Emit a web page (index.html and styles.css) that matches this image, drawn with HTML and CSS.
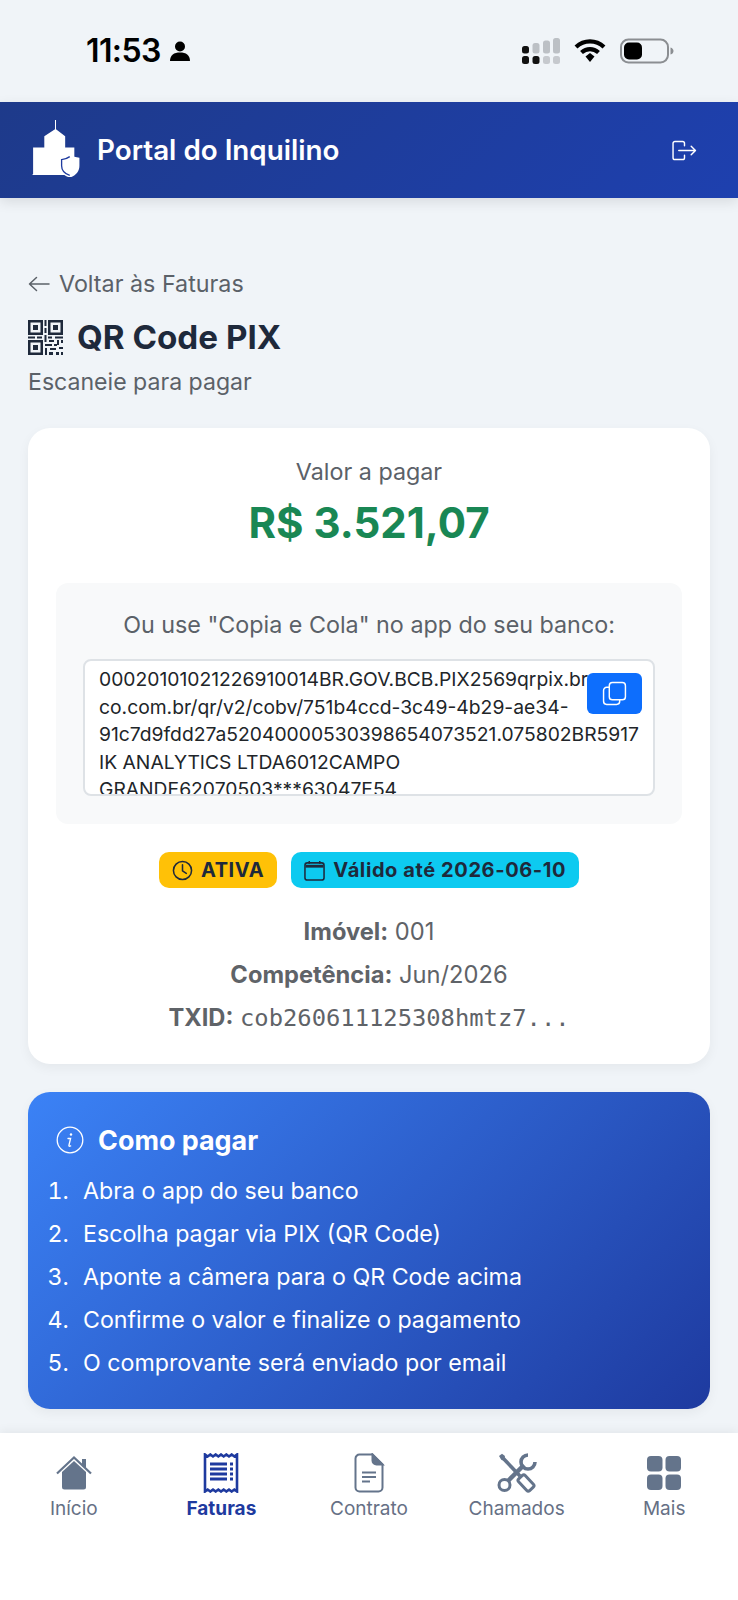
FILE: index.html
```html
<!DOCTYPE html>
<html lang="pt-BR">
<head>
<meta charset="utf-8">
<title>QR Code PIX</title>
<link rel="stylesheet" href="styles.css">
</head>
<body>
<div class="page">
  <div class="statusbar">
    <div class="status-left">
      <span class="clock">11:53</span>
      <svg class="person" viewBox="0 0 22 22"><circle cx="11" cy="6.500" r="5"/><path d="M1 21c0-6 4-8.500 10-8.500S21 15 21 21z"/></svg>
    </div>
    <div class="status-right">
      <svg class="cell" viewBox="0 0 38 26">
        <rect x="0" y="8" width="7" height="7.500" rx="2.500" fill="#111"/><rect x="0" y="18" width="7" height="8" rx="2.500" fill="#111"/>
        <rect x="10.500" y="5" width="7" height="10.500" rx="2.500" fill="#bcc0c5"/><rect x="10.500" y="18" width="7" height="8" rx="2.500" fill="#111"/>
        <rect x="21" y="2.500" width="7" height="13" rx="2.500" fill="#bcc0c5"/><rect x="21" y="18" width="7" height="8" rx="2.500" fill="#c6c9ce"/>
        <rect x="31" y="0" width="7" height="15.500" rx="2.500" fill="#bcc0c5"/><rect x="31" y="18" width="7" height="8" rx="2.500" fill="#c6c9ce"/>
      </svg>
      <svg class="wifi" viewBox="0 0 32 24" fill="none" stroke="#000" stroke-width="4.200">
        <path d="M2 9c8-7.500 20-7.500 28 0"/><path d="M7.500 14.500c5-4.500 12-4.500 17 0"/>
        <path d="M11.500 18.500 16 15l4.500 3.500L16 24z" fill="#000" stroke="none"/>
      </svg>
      <svg class="battery" viewBox="0 0 54 26">
        <rect x="1" y="1.500" width="47" height="23" rx="7.500" fill="none" stroke="#8b8e92" stroke-width="2"/>
        <rect x="4" y="4.500" width="18" height="17" rx="5" fill="#000"/>
        <path d="M50.500 9.500c2 .5 3 2 3 3.500s-1 3-3 3.500z" fill="#8b8e92"/>
      </svg>
    </div>
  </div>

  <header class="appbar">
    <div class="brand">
      <svg class="logo" viewBox="0 0 48 56">
        <path d="M23.500 0h1v9l9 7v11h9v27H1l1-1V27h11V16l10.500-7z" fill="#fff"/>
        <path d="M38 33.500c3 2.500 6 3.500 9.500 3.500v8c0 6-4 10-9.500 11.500C32.500 55 28 51 28 45v-8c4 0 7-1.500 10-3.500z" fill="#fff"/>
        <path d="M38 36c-2.500 1.800-5 2.800-8 3v6c0 4.500 3.500 8 8 9.500" fill="none" stroke="#1e3a9f" stroke-width="1.300"/>
      </svg>
      <span class="brand-name">Portal do Inquilino</span>
    </div>
    <svg class="logout" viewBox="0 0 26 22" fill="none" stroke="#fff" stroke-width="1.500" stroke-linecap="round" stroke-linejoin="round">
      <path d="M13 6V3.500A2 2 0 0 0 11 1.500H3A2 2 0 0 0 1 3.500v15a2 2 0 0 0 2 2h8a2 2 0 0 0 2-2V16"/>
      <path d="M7 11h17M20 6.500l4.500 4.500-4.500 4.500"/>
    </svg>
  </header>

  <main class="content">
    <a class="back"><span class="back-arrow">
      <svg viewBox="0 0 22 16" fill="none" stroke="#5b6168" stroke-width="1.500" stroke-linecap="round" stroke-linejoin="round"><path d="M21 8H1.500M8.500 1.500 1.500 8l7 6.500"/></svg></span>Voltar às Faturas</a>
    <h1 class="title">
      <svg class="qr" viewBox="0 0 35 35" fill="#1e293b">
        <path fill-rule="evenodd" d="M0 0h15v15H0zM2.500 2.500v10h10v-10zM20 0h15v15H20zm2.500 2.500v10h10v-10zM0 20h15v15H0zm2.500 2.500v10h10v-10z"/>
        <path d="M5 5h5v5H5zM25 5h5v5h-5zM5 25h5v5H5zM16.500 0h2v6h-2zM16.500 8h2v5h-2zM0 16.500h7v2H0zM9 16.500h5v2H9zM16.500 15h2v7h-2zM20 16.500h4v2h-4zM27 16.500h8v2h-8zM21 20h5v2h-5zM29 20h2v5h-2zM33 20h2v3h-2zM17 24h7v2h-7zM26 24h3v2h-3zM17 28h2v7h-2zM22 28h6v2h-6zM31 27h4v2h-4zM21 32h4v3h-4zM28 32h3v3h-3zM33 32h2v3h-2z"/>
      </svg>
      QR Code PIX
    </h1>
    <p class="subtitle">Escaneie para pagar</p>

    <section class="card">
      <p class="amount-label">Valor a pagar</p>
      <p class="amount">R$ 3.521,07</p>
      <div class="copy-panel">
        <p class="copy-label">Ou use "Copia e Cola" no app do seu banco:</p>
        <div class="code-box">
          <div class="code">00020101021226910014BR.GOV.BCB.PIX2569qrpix.br<br>co.com.br/qr/v2/cobv/751b4ccd-3c49-4b29-ae34-<br>91c7d9fdd27a52040000530398654073521.075802BR5917<br>IK ANALYTICS LTDA6012CAMPO<br>GRANDE62070503***63047E54</div>
          <button class="copy-btn" type="button" aria-label="Copiar">
            <svg viewBox="0 0 24 24" fill="none" stroke="#fff" stroke-width="1.400" stroke-linejoin="round"><rect x="7" y="1.500" width="15.500" height="16.500" rx="3"/><path d="M7 6H4.500a3 3 0 0 0-3 3v10.500a3 3 0 0 0 3 3H14a3 3 0 0 0 3-3V18"/></svg>
          </button>
        </div>
      </div>
      <div class="badges">
        <span class="badge badge-warn">
          <svg viewBox="0 0 22 22" fill="none" stroke="#1e293b" stroke-width="1.600" stroke-linecap="round" stroke-linejoin="round"><circle cx="11" cy="11" r="9.500"/><path d="M11 5v6.500l4 2.500"/></svg>ATIVA</span>
        <span class="badge badge-info">
          <svg viewBox="0 0 22 22" fill="none" stroke="#1e293b" stroke-width="1.600" stroke-linejoin="round"><rect x="1" y="3" width="20" height="18" rx="2.500"/><path d="M1.500 6.500h19" stroke-width="3"/><path d="M5.500 1v3M16.500 1v3"/></svg>Válido até 2026-06-10</span>
      </div>
      <dl class="facts">
        <div><b>Imóvel:</b> 001</div>
        <div><b>Competência:</b> Jun/2026</div>
        <div><b>TXID:</b> <code>cob260611125308hmtz7...</code></div>
      </dl>
    </section>

    <section class="howto">
      <h2 class="howto-title">
        <svg viewBox="0 0 28 28" fill="none" stroke="#fff" stroke-width="1.300"><circle cx="14" cy="14" r="12.800"/><path d="M12 12.500h2.600l-1.700 7c-.2.800.3 1 1.800.4" stroke-linecap="round"/><circle cx="15" cy="8.500" r="1.200" fill="#fff" stroke="none"/></svg>
        Como pagar
      </h2>
      <ol class="steps">
        <li>Abra o app do seu banco</li>
        <li>Escolha pagar via PIX (QR Code)</li>
        <li>Aponte a câmera para o QR Code acima</li>
        <li>Confirme o valor e finalize o pagamento</li>
        <li>O comprovante será enviado por email</li>
      </ol>
    </section>
  </main>

  <nav class="tabbar">
    <a class="tab">
      <svg viewBox="0 0 40 40"><path d="M8 19 20 8l12 11v15a2.500 2.500 0 0 1-2.500 2.500h-19A2.500 2.500 0 0 1 8 34z" fill="#64748b"/><path d="M3 20.500 20 4.500l17 16" fill="none" stroke="#64748b" stroke-width="2.200"/><path d="M28 6h4v10l-4-3.500z" fill="#64748b"/></svg>
      <span>Início</span>
    </a>
    <a class="tab tab-active">
      <svg viewBox="0 0 40 40"><path d="M4 1.500l2.667 2 2.667-2 2.667 2 2.667-2 2.667 2 2.667-2 2.667 2 2.667-2 2.667 2 2.667-2 2.667 2 2.667-2V38.500l-2.667-2-2.667 2-2.667-2-2.667 2-2.667-2-2.667 2-2.667-2-2.667 2-2.667-2-2.667 2-2.667-2-2.667 2z" fill="#fff" stroke="#1e3a9f" stroke-width="2.600"/><path d="M9 9.500h17v3H9zM9 14.500h17v3H9zM9 19.500h17v3H9zM9 24.500h17v3H9zM29 9.500h3v3h-3zM29 14.500h3v3h-3zM29 19.500h3v3h-3zM29 24.500h3v3h-3z" fill="#1e3a9f"/></svg>
      <span>Faturas</span>
    </a>
    <a class="tab">
      <svg viewBox="0 0 40 40" fill="none" stroke="#64748b" stroke-width="2"><path d="M10.500 1.500h13l10 10v23a4 4 0 0 1-4 4h-19a4 4 0 0 1-4-4V5.500a4 4 0 0 1 4-4z"/><path d="M23.500 1.500v6a4 4 0 0 0 4 4h6z" fill="#64748b"/><path d="M13 19.500h14M13 24h14M13 28.500h8" stroke-width="2.200"/></svg>
      <span>Contrato</span>
    </a>
    <a class="tab">
      <svg viewBox="0 0 40 40" fill="none" stroke="#64748b">
        <path d="M4.500 3.500 23 23" stroke-width="3.600"/>
        <path d="M2 3 5 .8 8 3 7 7.500 4.500 7z" fill="#64748b" stroke="none"/>
        <rect x="-4.500" y="-8" width="9" height="16" rx="2" transform="translate(29 30) rotate(-43)" stroke-width="3"/>
        <path d="M11 28 27 12" stroke-width="4.500"/>
        <circle cx="7.500" cy="32" r="5.500" stroke-width="3"/>
        <path d="M31 2A7 7 0 1 0 38 9" stroke-width="3.600"/>
      </svg>
      <span>Chamados</span>
    </a>
    <a class="tab">
      <svg viewBox="0 0 40 40" fill="#64748b"><rect x="3" y="3" width="15.500" height="15.500" rx="4"/><rect x="21.500" y="3" width="15.500" height="15.500" rx="4"/><rect x="3" y="21.500" width="15.500" height="15.500" rx="4"/><rect x="21.500" y="21.500" width="15.500" height="15.500" rx="4"/></svg>
      <span>Mais</span>
    </a>
  </nav>
</div>
</body>
</html>
```

FILE: styles.css
```css
* { box-sizing: border-box; margin: 0; padding: 0; }
html, body { height: 100%; }
body { font-family: Inter, "Noto Sans", "Liberation Sans", sans-serif; background: #f0f4f8; color: #1e293b; overflow: hidden; }
svg { display: block; flex: none; }

.page { height: 1600px; display: flex; flex-direction: column; }

.statusbar { height: 102px; flex: none; display: flex; justify-content: space-between; padding: 36px 64px 0 86px; background: #f0f4f8; }
.status-left { display: flex; align-items: flex-start; gap: 8px; }
.clock { font-size: 32px; line-height: 30px; font-weight: 600; color: #000; letter-spacing: -.6px; }
.person { width: 22px; height: 22px; margin-top: 4px; fill: #000; }
.status-right { display: flex; align-items: flex-start; gap: 14px; padding-top: 2px; }
.cell { width: 38px; height: 26px; }
.wifi { width: 32px; height: 24px; }
.battery { width: 54px; height: 26px; }

.appbar { height: 96px; flex: none; display: flex; align-items: center; justify-content: space-between; padding: 0 41px 0 31px; background: linear-gradient(135deg, #1e3a8a, #1e40af); box-shadow: 0 4px 12px rgba(0, 0, 0, .1); position: relative; }
.brand { display: flex; align-items: center; gap: 17px; }
.logo { width: 49px; height: 57px; margin-bottom: 4px; }
.brand-name { font-size: 27.800px; font-weight: 600; color: #fff; }
.logout { width: 25px; height: 21px; }

.content { flex: 1; min-height: 0; padding: 72px 28px 0; }
.back { display: flex; align-items: center; gap: 9px; height: 28px; font-size: 23.300px; line-height: 28px; color: #5b6168; }
.back-arrow svg { width: 22px; height: 16px; }
.title { display: flex; align-items: center; gap: 14px; margin-top: 19px; font-size: 33.200px; line-height: 40px; font-weight: 700; color: #1e293b; }
.qr { width: 35px; height: 35px; }
.subtitle { margin-top: 11px; font-size: 23.100px; line-height: 28px; color: #5b6168; }

.card { margin-top: 32px; height: 636px; padding: 30px 28px 0; background: #fff; border-radius: 22px; box-shadow: 0 4px 12px rgba(0, 0, 0, .05); text-align: center; }
.amount-label { font-size: 23.300px; line-height: 28px; color: #5b6168; }
.amount { margin-top: 12px; font-size: 42px; line-height: 50px; font-weight: 700; color: #198754; }
.copy-panel { margin-top: 35px; height: 241px; padding: 28px 27px 0; background: #f8f9fa; border-radius: 12px; }
.copy-label { font-size: 23.300px; line-height: 28px; color: #5b6168; }
.code-box { position: relative; margin-top: 20px; height: 137px; padding: 5px 14px 0; overflow: hidden; background: #fff; border: 2px solid #dee2e6; border-radius: 8px; text-align: left; }
.code { font-size: 19.300px; line-height: 27.600px; color: #212529; white-space: nowrap; }
.copy-btn { position: absolute; top: 12px; right: 11px; width: 55px; height: 41px; display: flex; align-items: center; justify-content: center; background: #0d6efd; border: 0; border-radius: 6px; }
.copy-btn svg { width: 25px; height: 25px; }

.badges { display: flex; justify-content: center; gap: 14px; margin-top: 28px; }
.badge { display: flex; align-items: center; gap: 8px; height: 36px; padding: 0 13px; border-radius: 10px; font-size: 20px; font-weight: 700; letter-spacing: .6px; color: #1e293b; }
.badge svg { width: 21px; height: 21px; }
.badge-warn { background: #ffc107; }
.badge-info { background: #0dcaf0; }

.facts { margin-top: 22px; font-size: 23.700px; line-height: 43px; color: #5f6368; }
.facts b { font-weight: 700; }
.facts code { font-family: "DejaVu Sans Mono", "Liberation Mono", monospace; font-size: 23.800px; }

.howto { margin-top: 28px; height: 317px; padding: 30px 28px 0; border-radius: 22px; background: linear-gradient(135deg, #3b82f6, #1e3a9f); color: #fff; box-shadow: 0 4px 12px rgba(0, 0, 0, .05); }
.howto-title { display: flex; align-items: center; gap: 14px; font-size: 26.900px; line-height: 36px; font-weight: 700; }
.howto-title svg { width: 28px; height: 28px; }
.steps { margin-top: 12px; padding-left: 19px; list-style-position: outside; }
.steps li { padding-left: 8px; font-size: 23.200px; line-height: 43px; }

.tabbar { height: 167px; flex: none; display: grid; grid-template-columns: repeat(5, 1fr); padding-top: 20px; background: #fff; box-shadow: 0 -2px 10px rgba(0, 0, 0, .06); position: relative; }
.tab { display: flex; flex-direction: column; align-items: center; gap: 4px; font-size: 19px; line-height: 24px; color: #667085; }
.tab svg { width: 40px; height: 40px; }
.tab-active { color: #1e3a9f; font-weight: 700; }
```
